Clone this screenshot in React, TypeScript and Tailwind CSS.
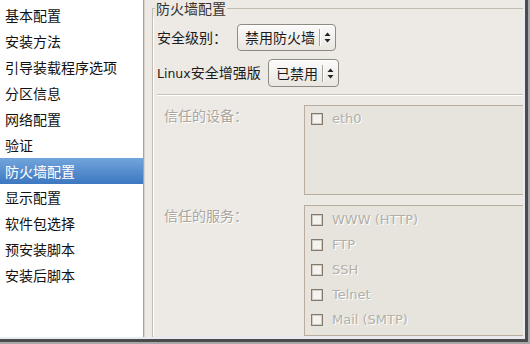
import React from "react";

const cjk = "font-['Noto_Sans_CJK_SC',sans-serif]";
const latin = "font-['DejaVu_Sans','Noto_Sans_CJK_SC',sans-serif]";

const navItems = [
  "基本配置",
  "安装方法",
  "引导装载程序选项",
  "分区信息",
  "网络配置",
  "验证",
  "防火墙配置",
  "显示配置",
  "软件包选择",
  "预安装脚本",
  "安装后脚本",
];

const services = ["WWW (HTTP)", "FTP", "SSH", "Telnet", "Mail (SMTP)"];

function Arrows() {
  return (
    <svg width="7" height="11" viewBox="0 0 7 11">
      <path d="M3.5 0.5 L6.5 4 L0.5 4 Z" fill="#222" />
      <path d="M0.5 7 L6.5 7 L3.5 10.5 Z" fill="#222" />
    </svg>
  );
}

function Combo({ label }: { label: string }) {
  return (
    <div className="flex h-full items-center rounded-[4px] border border-[#8f8a82] bg-linear-to-b from-[#fcfbfa] to-[#e9e6e1] pl-[7px] shadow-[inset_0_1px_0_#fff]">
      <span className={`${cjk} text-[14px] leading-[17px] text-[#1c1c1c]`}>{label}</span>
      <div className="ml-[4px] h-[17px] w-[1px] bg-[#a9a49c] shadow-[1px_0_0_#fff]" />
      <div className="flex w-[15px] items-center justify-center">
        <Arrows />
      </div>
    </div>
  );
}

function Check({ label }: { label: string }) {
  return (
    <div className="flex h-[25px] items-center pl-[6px]">
      <div className="h-[12px] w-[12px] border border-[#83796d] bg-[#f5f3ef] shadow-[inset_0_0_0_1px_#d2ccc3]" />
      <span
        className={`${latin} ml-[9px] text-[13px] leading-[16px] text-[#b3afa8] [text-shadow:1px_1px_0_#fff]`}
      >
        {label}
      </span>
    </div>
  );
}

export default function App() {
  return (
    <div className="h-[344px] w-[530px] overflow-hidden bg-[#a8a8a8]">
      <div className="h-[342px] w-[528px] bg-[#4b4b4b]">
        <div className="h-[339px] w-[525px] bg-[#e6ebf4]">
          <div className="flex h-[337px] w-[523px] overflow-hidden bg-[#edeae5]">
            {/* sidebar */}
            <div className="h-full w-[144px] shrink-0 border-r border-[#aca396] bg-white pt-[2px] shadow-[1px_0_0_#d9d3ca]">
              {navItems.map((item) => {
                const active = item === "防火墙配置";
                return (
                  <div
                    key={item}
                    className={`flex h-[26px] items-center pl-[5px] ${cjk} text-[14px] ${
                      active
                        ? "bg-linear-to-b from-[#72a5dc] to-[#3c77c0] text-white"
                        : "text-[#111]"
                    }`}
                  >
                    {item}
                  </div>
                );
              })}
            </div>

            {/* panel */}
            <div className="h-full w-[420px] shrink-0 pl-[8px]">
              <fieldset className="h-[360px] w-[420px] border-l border-t border-[#c3bcb1]">
                <legend className={`${cjk} ml-[2px] px-[1px] text-[14px] leading-[17px] text-[#333]`}>
                  防火墙配置
                </legend>
                <div className="pl-[4px] pt-[7px] shadow-[inset_1px_0_0_#fff]">
                  <div className="flex h-[27px] items-center">
                    <span className={`${cjk} w-[80px] text-[14px] text-[#1c1c1c]`}>安全级别：</span>
                    <Combo label="禁用防火墙" />
                  </div>
                  <div className="mt-[8px] flex h-[28px] items-center">
                    <span className={`w-[111px] text-[14px] text-[#1c1c1c] ${cjk}`}>
                      <span className={`${latin} text-[12.5px]`}>Linux</span>安全增强版
                    </span>
                    <Combo label="已禁用" />
                  </div>
                  <div className="mt-[7px] h-[1px] w-[400px] bg-[#c9c2b8] shadow-[0_1px_0_#fff]" />

                  <div className="mt-[10px] flex pl-[7px]">
                    <span
                      className={`${cjk} w-[140px] shrink-0 pt-[2px] text-[14px] leading-[17px] text-[#aaa59e] [text-shadow:1px_1px_0_#fff]`}
                    >
                      信任的设备：
                    </span>
                    <div className="h-[90px] w-[260px] shrink-0 border border-[#b8ad9f] bg-[#e7e4de]">
                      <Check label="eth0" />
                    </div>
                  </div>

                  <div className="mt-[10px] flex pl-[7px]">
                    <span
                      className={`${cjk} w-[140px] shrink-0 pt-[2px] text-[14px] leading-[17px] text-[#aaa59e] [text-shadow:1px_1px_0_#fff]`}
                    >
                      信任的服务：
                    </span>
                    <div className="h-[131px] w-[260px] shrink-0 border border-[#b8ad9f] bg-[#e7e4de] pt-[1px]">
                      {services.map((s) => (
                        <Check key={s} label={s} />
                      ))}
                    </div>
                  </div>
                </div>
              </fieldset>
            </div>
          </div>
        </div>
      </div>
    </div>
  );
}
